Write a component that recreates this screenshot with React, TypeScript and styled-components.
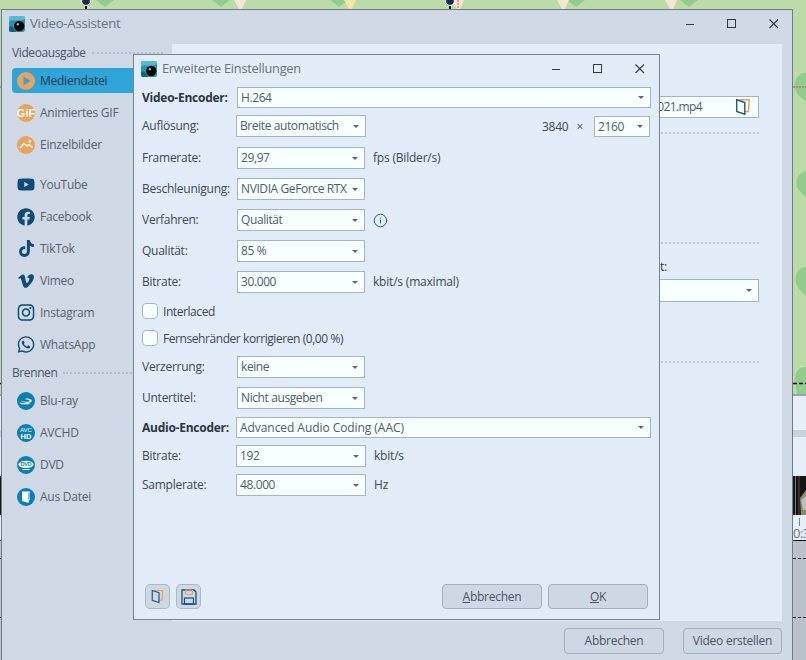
import React from "react";
import styled, { createGlobalStyle } from "styled-components";
import {
  FaFacebook,
  FaInstagram,
  FaTiktok,
  FaVimeoV,
  FaWhatsapp,
  FaYoutube,
} from "react-icons/fa";
import { Info } from "lucide-react";

const GlobalStyle = createGlobalStyle`
  html, body {
    margin: 0;
    padding: 0;
    background: #cfd9e5;
  }
  * {
    box-sizing: border-box;
  }
`;

const Logo = () => (
  <svg width="16" height="16" viewBox="0 0 16 16">
    <rect width="16" height="16" rx="2.5" fill="#2a93b5" />
    <path d="M0 6 C4 2 8 7 16 3 V0 H0 Z" fill="#63c4d6" opacity="0.8" />
    <path d="M0 11 C3 9 5 12 7 16 H2 Q0 16 0 14 Z" fill="#15627f" />
    <circle cx="10.2" cy="10" r="5.2" fill="#050505" />
    <circle cx="8.8" cy="8.2" r="1.2" fill="#a5afb5" />
  </svg>
);

const OpenIcon = ({ size = 18 }: { size?: number }) => (
  <svg width={size} height={size} viewBox="0 0 18 20" fill="none">
    <path d="M5 2 H16 L15 15 H11" stroke="#e9a253" strokeWidth="1.6" />
    <path d="M2 2 L11 5 V18 L2 15 Z" fill="none" stroke="#1d5b85" strokeWidth="1.6" />
  </svg>
);

const SaveIcon = () => (
  <svg width="16" height="16" viewBox="0 0 16 16" fill="none">
    <path d="M1 1 H13 L15 3 V15 H1 Z" stroke="#17507a" strokeWidth="1.3" />
    <rect x="4.5" y="1" width="7" height="4.5" rx="1" stroke="#e9a253" strokeWidth="1.2" />
    <rect x="3.5" y="9" width="9" height="6" stroke="#17507a" strokeWidth="1.2" />
  </svg>
);

const Disc = ({ color, children }: { color: string; children: React.ReactNode }) => (
  <svg width="18" height="18" viewBox="0 0 18 18">
    <circle cx="9" cy="9" r="9" fill={color} />
    {children}
  </svg>
);

const GlyphText = styled.text`
  font-family: "Liberation Sans", Arial, sans-serif;
  fill: #fff;
  text-anchor: middle;
  letter-spacing: 0;
`;

const PlayIcon = () => (
  <Disc color="#e9a35a">
    <path d="M6.5 4.6 L13.5 9 L6.5 13.4 Z" fill="#2fa4d8" />
  </Disc>
);
const GifIcon = () => (
  <Disc color="#e9a35a">
    <GlyphText x="9" y="12.8" fontSize="11" fontWeight="700">
      GiF
    </GlyphText>
  </Disc>
);
const PictureIcon = () => (
  <Disc color="#e9a35a">
    <path d="M3 12 L7 7.5 L10 10 L12 8.5 L15.5 11.5" fill="none" stroke="#fff" strokeWidth="1.4" />
    <circle cx="12.8" cy="5.2" r="1.2" fill="#fff" />
  </Disc>
);
const BluRayIcon = () => (
  <Disc color="#0a7fb4">
    <path
      d="M2.5 10.5 C6 8.5 12 12.5 14.5 9.5 C15.5 8 13 6.5 9 6.6 L8 7.6 C11 7.5 13 8.2 12.5 9.2 C11 11 6 8 2.5 10.5 Z"
      fill="#fff"
    />
    <path d="M3 11 H13 L12 12.2 H4 Z" fill="#fff" />
  </Disc>
);
const AvchdIcon = () => (
  <Disc color="#0a7fb4">
    <GlyphText x="9" y="8" fontSize="6">
      AVC
    </GlyphText>
    <GlyphText x="9" y="14.5" fontSize="7.5" fontWeight="700">
      HD
    </GlyphText>
  </Disc>
);
const DvdIcon = () => (
  <Disc color="#0a7fb4">
    <ellipse cx="9" cy="8.4" rx="7.5" ry="3.6" fill="#fff" />
    <text
      x="9"
      y="10.4"
      fontSize="5.4"
      fontWeight="700"
      fontFamily="Liberation Sans, Arial, sans-serif"
      fill="#0a7fb4"
      textAnchor="middle"
    >
      DVD
    </text>
    <rect x="5.5" y="13" width="7" height="1" fill="#fff" />
  </Disc>
);
const FileDiscIcon = () => (
  <Disc color="#0a7fb4">
    <path d="M5 3.5 H13 V12 L11.6 12.4 V15 L5 13 Z" fill="#fff" />
    <path d="M12 4.5 V11.5" stroke="#0a7fb4" strokeWidth="1" />
  </Disc>
);

const WinMin = () => (
  <svg width="14" height="14" viewBox="0 0 14 14">
    <path d="M0 7.5 H8" transform="translate(3 0)" stroke="#2f3a46" strokeWidth="1" />
  </svg>
);
const WinMax = () => (
  <svg width="14" height="14" viewBox="0 0 14 14">
    <rect x="2.5" y="2.5" width="8" height="8" fill="none" stroke="#2f3a46" strokeWidth="1" />
  </svg>
);
const WinClose = () => (
  <svg width="14" height="14" viewBox="0 0 14 14">
    <path d="M2.5 2.5 L11 11 M11 2.5 L2.5 11" fill="none" stroke="#2f3a46" strokeWidth="1.1" />
  </svg>
);

const WindowControls = () => (
  <Controls>
    <WinMin />
    <WinMax />
    <WinClose />
  </Controls>
);

const MapBand = () => (
  <svg width="806" height="9" viewBox="0 0 806 9" style={{ display: "block" }}>
    <rect width="806" height="9" fill="#bcdba8" />
    {[105, 221, 339, 576, 689].map((x) => (
      <path key={x} d={`M${x - 9} 0 H${x + 9} L${x} 7 Z`} fill="#93cb8e" />
    ))}
    {[240, 350, 458, 563, 671].map((x, i) => (
      <path key={x} d={`M${x - 6} 0 H${x + 6} L${x + 2} 9 H${x - 1} Z`} fill={i === 1 ? "#f3e6a6" : "#f4e7d0"} />
    ))}
    <path d="M458 0 V9" stroke="#d6485a" strokeWidth="1" strokeDasharray="2 1" />
    <rect x="85" y="4" width="2" height="5" fill="#111" />
    <circle cx="86" cy="1" r="4.4" fill="#1c2b4c" stroke="#fff" />
    <rect x="449" y="4" width="2" height="5" fill="#111" />
    <circle cx="450" cy="1" r="4.4" fill="#1c2b4c" stroke="#fff" />
  </svg>
);

const MapSide = () => (
  <svg width="13" height="385" viewBox="0 0 13 385" style={{ display: "block" }}>
    <rect width="13" height="385" fill="#bcdba8" />
    <path d="M13 64 C4 64 0 72 2 80 C4 86 9 90 13 92 Z" fill="#93cb8e" />
    <path d="M13 162 C6 164 2 170 4 178 C6 182 10 186 13 188 Z" fill="#93cb8e" />
    <path d="M13 258 C5 258 1 266 3 274 C5 280 9 284 13 286 Z" fill="#93cb8e" />
    <path d="M13 358 C5 358 1 364 2 374 L4 385 H13 Z" fill="#93cb8e" />
    <path d="M0 78 H13" stroke="#c8444a" strokeWidth="1" strokeDasharray="2 1" />
    <path d="M0 374.5 H13" stroke="#111" strokeWidth="1.4" strokeDasharray="4 2" />
  </svg>
);

const Thumb = () => (
  <svg width="13" height="39" viewBox="0 0 13 39" style={{ display: "block" }}>
    <rect width="13" height="39" fill="#151515" />
    <rect x="2" width="1" height="39" fill="#777" />
    <rect x="5" y="0" width="2" height="39" fill="#3a2e24" />
    <path d="M7 22 L13 14 V39 H8 Z" fill="#8b8b70" />
    <path d="M8 24 L13 20 V34 H10 Z" fill="#bdbdb8" />
  </svg>
);

const BackStrip = ({ width, time }: { width: number; time?: string }) => (
  <Strip $width={width}>
    <MapSide />
    <StripShade />
    <StripWhite $height={34} />
    <StripBand />
    <StripWhite $height={39} />
    <Thumb />
    <Ruler>{time}</Ruler>
    <Track>
      <TrackLine />
      <TrackLine $top={58} />
    </Track>
  </Strip>
);

const Select = ({
  value,
  width,
  inset,
  loose,
}: {
  value: string;
  width?: number;
  inset?: boolean;
  loose?: boolean;
}) => (
  <SelectBox $width={width} $inset={inset}>
    <SelectValue $loose={loose}>{value}</SelectValue>
    <Arrow />
  </SelectBox>
);

const sideTop = [
  { icon: <FaYoutube size={19} />, label: "YouTube" },
  { icon: <FaFacebook size={18} />, label: "Facebook" },
  { icon: <FaTiktok size={17} />, label: "TikTok" },
  { icon: <FaVimeoV size={18} />, label: "Vimeo" },
  { icon: <FaInstagram size={19} />, label: "Instagram" },
  { icon: <FaWhatsapp size={19} />, label: "WhatsApp" },
];

const sideBurn = [
  { icon: <BluRayIcon />, label: "Blu-ray" },
  { icon: <AvchdIcon />, label: "AVCHD" },
  { icon: <DvdIcon />, label: "DVD" },
  { icon: <FileDiscIcon />, label: "Aus Datei" },
];

const App = () => {
  return (
    <Page>
      <GlobalStyle />
      <MapBand />
      <Desk>
        <BackStrip width={1} />
        <Window>
          <TitleBar>
            <Logo />
            <MainTitle>Video-Assistent</MainTitle>
            <WindowControls />
          </TitleBar>
          <Body>
            <Sidebar>
              <SideHeader>
                <span>Videoausgabe</span>
                <Dots />
              </SideHeader>
              <SideItem $active>
                <IconSlot>
                  <PlayIcon />
                </IconSlot>
                <SideText>Mediendatei</SideText>
              </SideItem>
              <SideItem>
                <IconSlot>
                  <GifIcon />
                </IconSlot>
                <SideText>Animiertes GIF</SideText>
              </SideItem>
              <SideItem>
                <IconSlot>
                  <PictureIcon />
                </IconSlot>
                <SideText>Einzelbilder</SideText>
              </SideItem>
              <SideSpacer />
              {sideTop.map((item) => (
                <SideItem key={item.label}>
                  <IconSlot>{item.icon}</IconSlot>
                  <SideText>{item.label}</SideText>
                </SideItem>
              ))}
              <SideHeader>
                <span>Brennen</span>
                <Dots />
              </SideHeader>
              {sideBurn.map((item) => (
                <SideItem key={item.label}>
                  <IconSlot>{item.icon}</IconSlot>
                  <SideText>{item.label}</SideText>
                </SideItem>
              ))}
            </Sidebar>
            <Panel>
              <FileField>
                <FileName>2021.mp4</FileName>
                <OpenIcon />
              </FileField>
              <PanelRule $top={14} />
              <PanelRule $top={108} />
              <FormatLabel>Videoformat:</FormatLabel>
              <PanelSelectRow>
                <Select value="" />
              </PanelSelectRow>
              <PanelRule $top={59} />
            </Panel>
          </Body>
          <Footer>
            <Button $width={100}>Abbrechen</Button>
            <Button $width={99}>Video erstellen</Button>
          </Footer>

          <Dialog>
            <DialogTitleBar>
              <Logo />
              <DialogTitle>Erweiterte Einstellungen</DialogTitle>
              <WindowControls />
            </DialogTitleBar>
            <Form>
              <Row $height={21}>
                <Label $bold>Video-Encoder:</Label>
                <Select value="H.264" inset />
              </Row>
              <Row $gap={7}>
                <Label>Auflösung:</Label>
                <Select value="Breite automatisch" width={130} />
                <SizeGroup>
                  <span>3840</span>
                  <Times>×</Times>
                  <Select value="2160" width={56} />
                </SizeGroup>
              </Row>
              <Row $gap={10}>
                <Label>Framerate:</Label>
                <Select value="29,97" width={128} inset />
                <Suffix>fps (Bilder/s)</Suffix>
              </Row>
              <Row $gap={9}>
                <Label>Beschleunigung:</Label>
                <Select value="NVIDIA GeForce RTX 3080" width={128} inset />
              </Row>
              <Row $gap={9}>
                <Label>Verfahren:</Label>
                <Select value="Qualität" width={128} inset />
                <InfoSlot>
                  <Info size={15} strokeWidth={1.6} />
                </InfoSlot>
              </Row>
              <Row $gap={9}>
                <Label>Qualität:</Label>
                <Select value="85 %" width={128} inset />
              </Row>
              <Row $gap={9}>
                <Label>Bitrate:</Label>
                <Select value="30.000" width={128} inset />
                <Suffix>kbit/s (maximal)</Suffix>
              </Row>
              <Row $gap={10} $height={16}>
                <Check />
                <CheckLabel>Interlaced</CheckLabel>
              </Row>
              <Row $gap={11} $height={16}>
                <Check />
                <CheckLabel>Fernsehränder korrigieren (0,00 %)</CheckLabel>
              </Row>
              <Row $gap={10}>
                <Label>Verzerrung:</Label>
                <Select value="keine" width={128} inset />
              </Row>
              <Row $gap={9}>
                <Label>Untertitel:</Label>
                <Select value="Nicht ausgeben" width={128} inset />
              </Row>
              <Row $gap={8} $height={21}>
                <Label $bold>Audio-Encoder:</Label>
                <Select value="Advanced Audio Coding (AAC)" loose />
              </Row>
              <Row $gap={7}>
                <Label>Bitrate:</Label>
                <Select value="192" width={130} />
                <Suffix>kbit/s</Suffix>
              </Row>
              <Row $gap={7}>
                <Label>Samplerate:</Label>
                <Select value="48.000" width={130} />
                <Suffix>Hz</Suffix>
              </Row>
            </Form>
            <DialogFooter>
              <IconButton>
                <OpenIcon size={15} />
              </IconButton>
              <IconButton>
                <SaveIcon />
              </IconButton>
              <FooterGap />
              <Button $width={100} $height={25}>
                <span>
                  <u>A</u>bbrechen
                </span>
              </Button>
              <Button $width={100} $height={25}>
                <span>
                  <u>O</u>K
                </span>
              </Button>
            </DialogFooter>
          </Dialog>
        </Window>
        <BackStrip width={13} time="0:3" />
      </Desk>
    </Page>
  );
};

export default App;

const Page = styled.div`
  width: 806px;
  height: 660px;
  overflow: hidden;
  font-family: "Open Sans", "Liberation Sans", sans-serif;
  font-size: 12px;
  letter-spacing: -0.25px;
  color: #3d4754;
`;
const Desk = styled.div`
  display: flex;
  height: 651px;
`;
const Strip = styled.div<{ $width: number }>`
  width: ${(p) => p.$width}px;
  flex-shrink: 0;
  overflow: hidden;
  display: flex;
  flex-direction: column;
  background: #e6eef8;
`;
const StripShade = styled.div`
  height: 2px;
  background: #9aa3ad;
`;
const StripWhite = styled.div<{ $height: number }>`
  height: ${(p) => p.$height}px;
  background: #e6eef8;
`;
const StripBand = styled.div`
  height: 7px;
  background: #c8d2de;
`;
const Ruler = styled.div`
  position: relative;
  height: 26px;
  background: #e6eef8;
  border-bottom: 1px solid #111;
  color: #6b7480;
  font-size: 13px;
  letter-spacing: -0.5px;
  padding-top: 9px;
  white-space: nowrap;
  &::before {
    content: "";
    position: absolute;
    left: 6px;
    top: 3px;
    height: 8px;
    border-left: 1px solid #7a828c;
  }
`;
const Track = styled.div`
  flex: 1;
  background: #b9c1cb;
  padding-top: 17px;
`;
const TrackLine = styled.div<{ $top?: number }>`
  border-top: 1px dashed #222;
  margin-top: ${(p) => p.$top || 0}px;
`;
const Window = styled.div`
  position: relative;
  width: 792px;
  flex-shrink: 0;
  background: #cfd9e5;
  border: 1px solid #6f7a86;
  border-bottom: none;
  display: flex;
  flex-direction: column;
`;
const TitleBar = styled.div`
  height: 34px;
  display: flex;
  align-items: center;
  padding: 0 11px 6px 7px;
`;
const MainTitle = styled.div`
  margin-left: 5px;
  padding-bottom: 2px;
  font-size: 13.2px;
  color: #667282;
`;
const Controls = styled.div`
  margin-left: auto;
  display: flex;
  gap: 28px;
`;
const Body = styled.div`
  height: 577px;
  display: flex;
`;
const Sidebar = styled.div`
  width: 170px;
  flex-shrink: 0;
  padding: 0 9px 0 10px;
  display: flex;
  flex-direction: column;
  gap: 7px;
`;
const SideHeader = styled.div`
  height: 17px;
  display: flex;
  align-items: center;
  gap: 6px;
  padding-bottom: 1px;
  color: #4a5563;
  font-weight: 500;
  letter-spacing: -0.4px;
`;
const Dots = styled.div`
  flex: 1;
  margin-top: 2px;
  border-top: 2px dotted #b4bdc9;
`;
const SideItem = styled.div<{ $active?: boolean }>`
  height: 25px;
  display: flex;
  align-items: center;
  gap: 5px;
  padding-left: 5px;
  margin-right: -9px;
  border-radius: 4px 0 0 4px;
  background: ${(p) => (p.$active ? "#2fa4d8" : "transparent")};
  color: ${(p) => (p.$active ? "#24384c" : "#56616f")};
`;
const SideText = styled.span`
  padding-bottom: 1px;
`;
const IconSlot = styled.span`
  width: 18px;
  height: 18px;
  display: flex;
  align-items: center;
  justify-content: center;
  color: #0f4a78;
`;
const SideSpacer = styled.div`
  height: 1px;
`;
const Panel = styled.div`
  width: 610px;
  background: #e2ecf8;
  padding: 52px 23px 0 18px;
  display: flex;
  flex-direction: column;
`;
const FileField = styled.div`
  height: 22px;
  display: flex;
  align-items: center;
  justify-content: flex-end;
  gap: 32px;
  padding-right: 6px;
  background: #f8ffff;
  border: 1px solid #a9b3c0;
  color: #515c6a;
`;
const FileName = styled.span`
  letter-spacing: -0.6px;
  padding-bottom: 1px;
`;
const PanelRule = styled.div<{ $top: number }>`
  margin-top: ${(p) => p.$top}px;
  border-top: 2px dotted #c1c8d2;
`;
const FormatLabel = styled.div`
  margin-top: 14px;
  height: 16px;
  text-align: right;
  padding-right: 92px;
  color: #24384c;
`;
const PanelSelectRow = styled.div`
  margin-top: 5px;
  height: 23px;
  display: flex;
`;
const Footer = styled.div`
  display: flex;
  justify-content: flex-end;
  gap: 19px;
  padding: 7px 10px 0 0;
`;
const Button = styled.div<{ $width: number; $height?: number }>`
  width: ${(p) => p.$width}px;
  height: ${(p) => p.$height || 26}px;
  display: flex;
  align-items: center;
  justify-content: center;
  padding-bottom: 1px;
  white-space: pre;
  background: #cdd8e4;
  border: 1px solid #a5afbc;
  border-radius: 4px;
  color: #4a5563;
`;
const Dialog = styled.div`
  position: absolute;
  left: 131px;
  top: 44px;
  width: 527px;
  height: 566px;
  background: #e2ecf8;
  border: 1px solid #7a8490;
  display: flex;
  flex-direction: column;
`;
const DialogTitleBar = styled(TitleBar)`
  height: 28px;
  padding: 0 12px 0 7px;
`;
const DialogTitle = styled.div`
  margin-left: 5px;
  padding-bottom: 2px;
  font-size: 12.8px;
  color: #667282;
`;
const Form = styled.div`
  padding: 4px 8px 0;
  display: flex;
  flex-direction: column;
`;
const Row = styled.div<{ $gap?: number; $height?: number }>`
  height: ${(p) => p.$height || 22}px;
  margin-top: ${(p) => p.$gap || 0}px;
  display: flex;
  align-items: center;
  white-space: nowrap;
`;
const Label = styled.div<{ $bold?: boolean }>`
  width: 94px;
  flex-shrink: 0;
  padding-bottom: 1px;
  font-weight: ${(p) => (p.$bold ? 700 : 400)};
  color: ${(p) => (p.$bold ? "#2c3541" : "#3d4754")};
  white-space: nowrap;
`;
const SelectBox = styled.div<{ $width?: number; $inset?: boolean }>`
  ${(p) => (p.$width ? `width: ${p.$width}px;` : "flex: 1;")}
  height: 100%;
  margin-left: ${(p) => (p.$inset ? 1 : 0)}px;
  display: flex;
  align-items: center;
  background: #f8ffff;
  border: 1px solid #a9b3c0;
  padding: 0 6px 0 3px;
  color: #515c6a;
`;
const SelectValue = styled.span<{ $loose?: boolean }>`
  flex: 1;
  min-width: 0;
  padding-bottom: 1px;
  overflow: hidden;
  white-space: nowrap;
  letter-spacing: ${(p) => (p.$loose ? "-0.06px" : "-0.4px")};
`;
const Arrow = styled.span`
  width: 0;
  height: 0;
  flex-shrink: 0;
  margin-left: 4px;
  border-left: 3.5px solid transparent;
  border-right: 3.5px solid transparent;
  border-top: 3.5px solid #5f6974;
`;
const SizeGroup = styled.div`
  margin-left: auto;
  margin-right: 1px;
  height: 100%;
  padding-top: 1px;
  display: flex;
  align-items: center;
  gap: 8px;
`;
const Times = styled.span`
  margin-right: 3px;
`;
const Suffix = styled.span`
  margin-left: 8px;
  padding-bottom: 1px;
  letter-spacing: -0.2px;
`;
const InfoSlot = styled.span`
  margin-left: 8px;
  display: flex;
  color: #1f6290;
`;
const Check = styled.span`
  width: 16px;
  height: 16px;
  margin-right: 5px;
  background: #f8ffff;
  border: 1px solid #a9b3c0;
  border-radius: 4px;
`;
const CheckLabel = styled.span`
  letter-spacing: -0.43px;
`;
const DialogFooter = styled.div`
  margin-top: auto;
  display: flex;
  gap: 6px;
  padding: 0 11px 10px;
`;
const FooterGap = styled.div`
  flex: 1;
`;
const IconButton = styled.div`
  width: 25px;
  height: 25px;
  display: flex;
  align-items: center;
  justify-content: center;
  background: #cdd8e4;
  border: 1px solid #aeb7c3;
  border-radius: 5px;
`;
